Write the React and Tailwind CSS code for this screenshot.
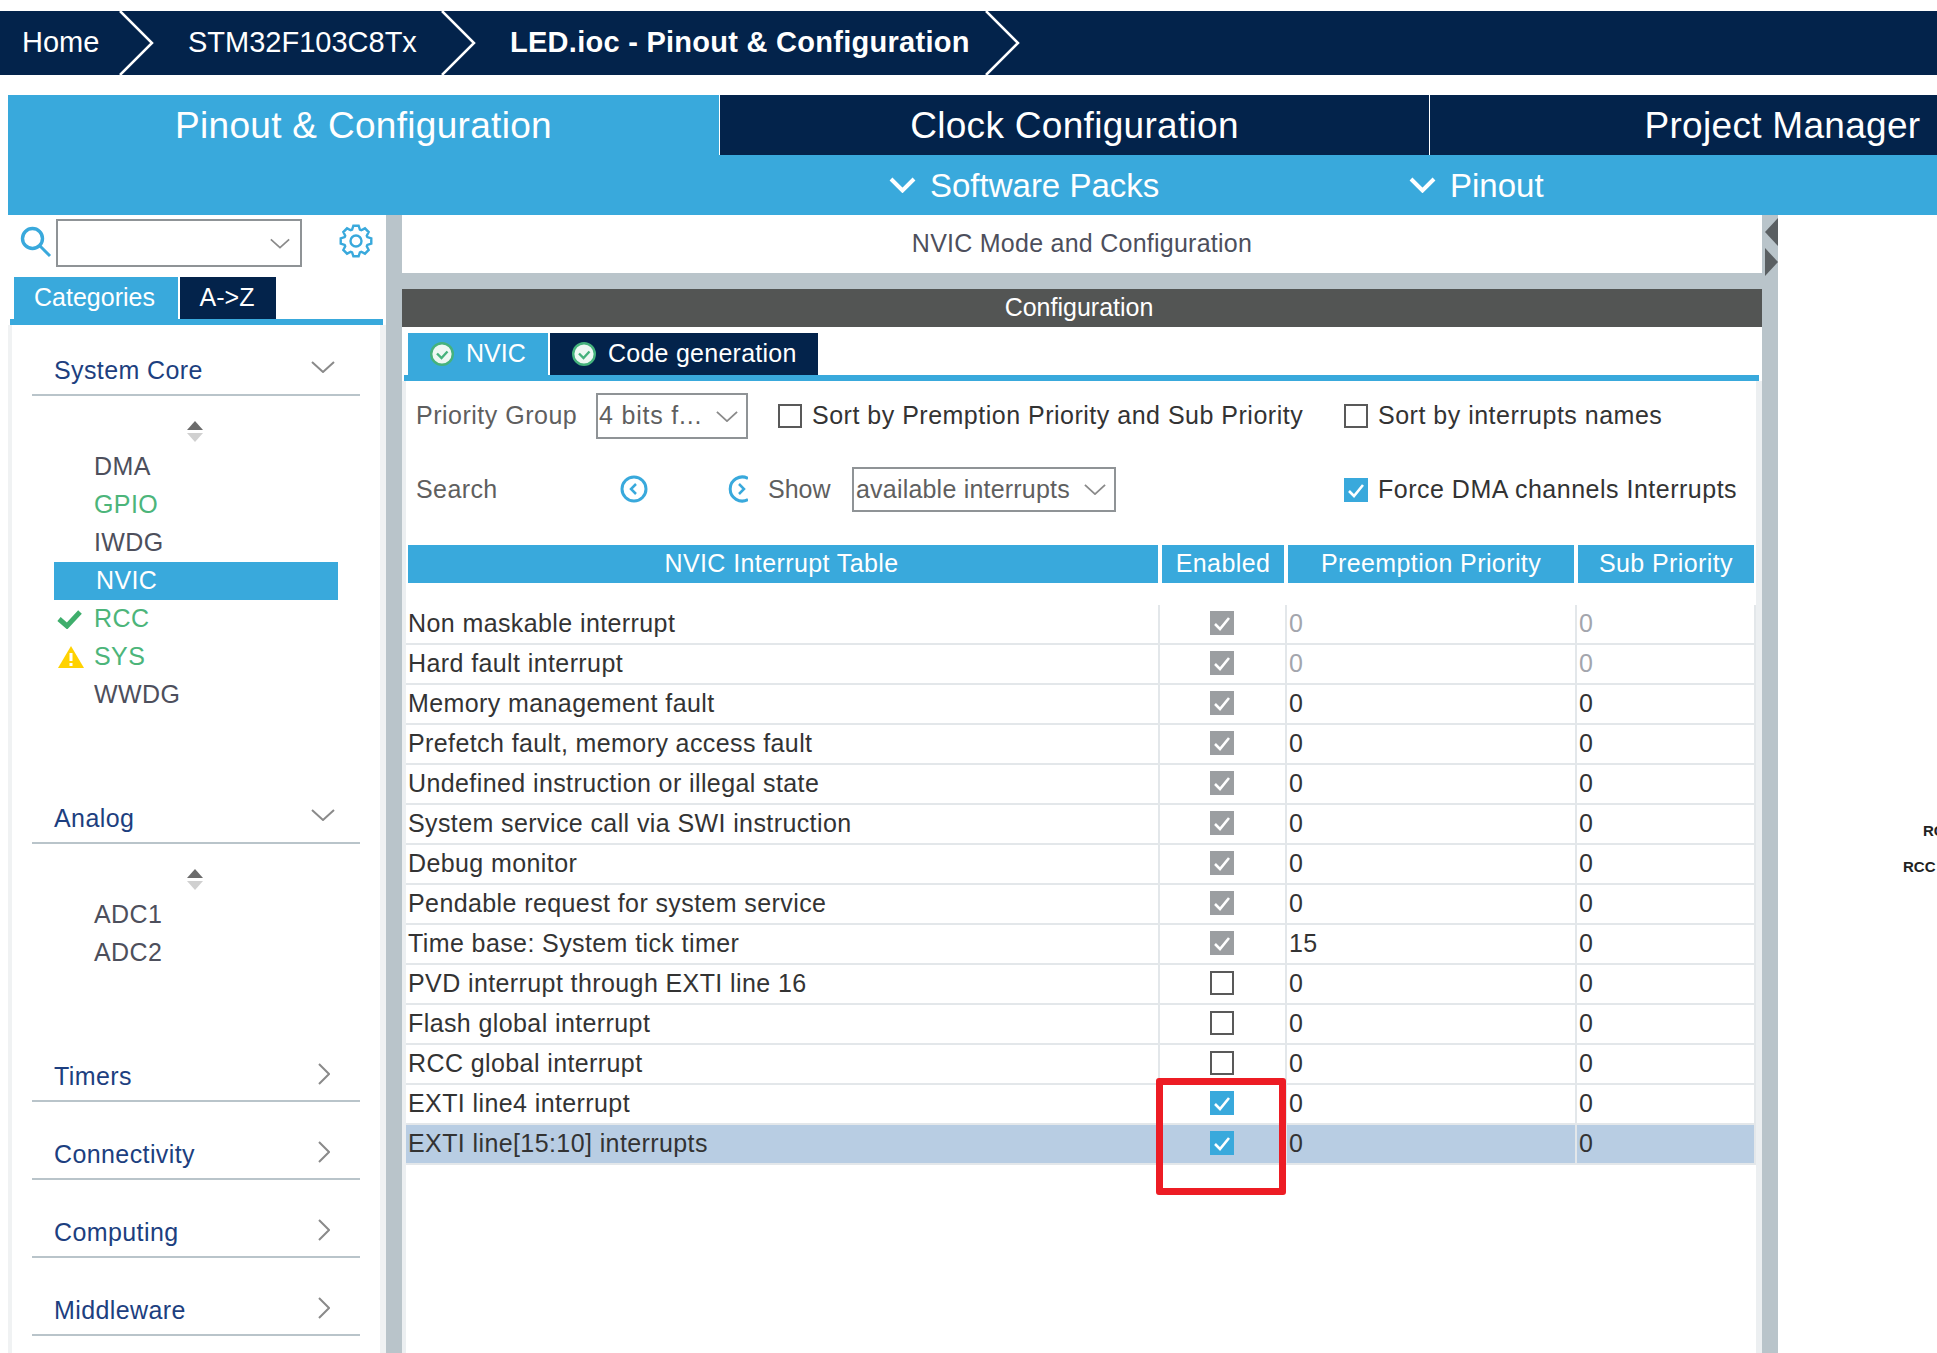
const rows = [
  ['Non maskable interrupt', 'locked', '0', '0', true],
  ['Hard fault interrupt', 'locked', '0', '0', true],
  ['Memory management fault', 'locked', '0', '0'],
  ['Prefetch fault, memory access fault', 'locked', '0', '0'],
  ['Undefined instruction or illegal state', 'locked', '0', '0'],
  ['System service call via SWI instruction', 'locked', '0', '0'],
  ['Debug monitor', 'locked', '0', '0'],
  ['Pendable request for system service', 'locked', '0', '0'],
  ['Time base: System tick timer', 'locked', '15', '0'],
  ['PVD interrupt through EXTI line 16', 'off', '0', '0'],
  ['Flash global interrupt', 'off', '0', '0'],
  ['RCC global interrupt', 'off', '0', '0'],
  ['EXTI line4 interrupt', 'on', '0', '0'],
  ['EXTI line[15:10] interrupts', 'on', '0', '0'],
];

// eight toothed gear outline, centred on 17,17
const gearPath = Array.from({ length: 8 }, (_, i) => {
  const a = (i * Math.PI) / 4 - Math.PI / 2;
  const pt = (r, d) => `${(17 + r * Math.cos(a + d)).toFixed(2)} ${(17 + r * Math.sin(a + d)).toFixed(2)}`;
  return `${i === 0 ? 'M' : 'L'}${pt(12, -0.39 + 0.06)}L${pt(15.5, -0.17)}L${pt(15.5, 0.17)}L${pt(12, 0.33)}`;
}).join('') + 'Z';

function ChevDown({ className }) {
  return (
    <svg viewBox="0 0 24 12" className={className}>
      <path d="M1 1l11 10L23 1" fill="none" stroke="#8a8a8a" strokeWidth="2" />
    </svg>
  );
}

function ChevRight() {
  return (
    <svg viewBox="0 0 12 22" className="w-[12px] h-[22px] mr-[30px] -mt-[4px]">
      <path d="M1 1l10 10L1 21" fill="none" stroke="#8a8a8a" strokeWidth="2" />
    </svg>
  );
}

function BigChev() {
  return (
    <svg viewBox="0 0 27 16" className="w-[27px] h-[16px] shrink-0">
      <path d="M2 2l11.5 11.5L25 2" fill="none" stroke="white" strokeWidth="4" />
    </svg>
  );
}

function Checkbox({ state }) {
  if (state === 'off') return <div className="w-[24px] h-[24px] border-2 border-[#595959] bg-white shrink-0" />;
  return (
    <div className={`w-[24px] h-[24px] shrink-0 ${state === 'on' ? 'bg-[#39a9dc]' : 'bg-[#9b9ea1]'}`}>
      <svg viewBox="0 0 24 24" className="w-[24px] h-[24px]">
        <path d="M5 13l5 5 9-11" fill="none" stroke="white" strokeWidth="2.6" />
      </svg>
    </div>
  );
}

function Crumb() {
  return (
    <svg viewBox="0 0 36 64" className="w-[36px] h-[64px] shrink-0">
      <path d="M1 0l32 32L1 64" fill="none" stroke="white" strokeWidth="2.5" />
    </svg>
  );
}

function OkDot() {
  return (
    <svg viewBox="0 0 24 24" className="w-[24px] h-[24px] shrink-0">
      <circle cx="12" cy="12" r="10.8" fill="#eef8f3" stroke="#45b27c" strokeWidth="2.4" />
      <path d="M7 11.5l4.5 4.5 6-6.5" fill="none" stroke="#45b27c" strokeWidth="2.4" />
    </svg>
  );
}

function SortArrows() {
  return (
    <svg viewBox="0 0 18 21" className="w-[18px] h-[21px] ml-[154px]">
      <path d="M9 0l8 9H1z" fill="#6b6b6b" />
      <path d="M9 21l8-9H1z" fill="#d0d0d0" />
    </svg>
  );
}

function Section({ title, open, children }) {
  return (
    <div>
      <div className="h-[50px] border-b-2 border-[#b9c4ca] flex items-center justify-between text-[#1d3f80] text-[25px] tracking-[0.4px] pl-[22px]">
        <span className="pt-[2px]">{title}</span>
        {open ? <ChevDown className="w-[24px] h-[12px] mr-[25px] -mt-[6px]" /> : <ChevRight />}
      </div>
      {children}
    </div>
  );
}

function Item({ label, color = 'text-[#4d4f5c]', icon, active }) {
  return (
    <div className={`h-[38px] w-[284px] ml-[22px] flex items-center text-[25px] tracking-[0.4px] ${active ? 'bg-[#39a9dc] text-white' : color}`}>
      <div className={`${active ? 'w-[42px]' : 'w-[40px]'} shrink-0 pl-[3px]`}>{icon}</div>
      {label}
    </div>
  );
}

export default function App() {
  return (
    <div className="relative w-[1937px] h-[1353px] overflow-hidden bg-white font-['Liberation_Sans',Arial,sans-serif]">
      {/* breadcrumb */}
      <div className="mt-[11px] h-[64px] bg-[#03234b] text-white flex items-center text-[29px]">
        <span className="pl-[22px] w-[119px]">Home</span>
        <Crumb />
        <span className="w-[286px] pl-[33px]">STM32F103C8Tx</span>
        <Crumb />
        <span className="w-[508px] pl-[33px] font-bold tracking-[0.27px] whitespace-nowrap">LED.ioc - Pinout &amp; Configuration</span>
        <Crumb />
      </div>

      {/* perspective tabs */}
      <div className="mt-[20px] ml-[8px] flex h-[60px] text-white text-[37px] tracking-[0.3px]">
        <div className="w-[711px] shrink-0 bg-[#39a9dc] flex items-center justify-center pt-[2px]">Pinout &amp; Configuration</div>
        <div className="w-[710px] shrink-0 bg-[#03234b] border-l border-white flex items-center justify-center pt-[2px]">Clock Configuration</div>
        <div className="w-[711px] shrink-0 bg-[#03234b] border-l border-white flex items-center justify-center pt-[2px] pr-[5px]">Project Manager</div>
      </div>
      <div className="ml-[8px] h-[60px] bg-[#39a9dc] text-white text-[33px] flex items-center pl-[881px]">
        <BigChev />
        <span className="ml-[14px] w-[479px] pt-[2px]">Software Packs</span>
        <BigChev />
        <span className="ml-[14px] pt-[2px]">Pinout</span>
      </div>

      <div className="flex h-[1138px]">
        {/* sidebar */}
        <div className="w-[386px] shrink-0 flex flex-col">
          <div className="mt-[4px] h-[48px] flex items-center pl-[20px]">
            <svg viewBox="0 0 32 34" className="w-[32px] h-[34px] shrink-0">
              <circle cx="12.5" cy="12.5" r="10" fill="none" stroke="#39a9dc" strokeWidth="3.4" />
              <path d="M20 20l10 10" stroke="#39a9dc" strokeWidth="3" />
            </svg>
            <div className="ml-[4px] w-[246px] h-[48px] border-2 border-[#8f9396] flex items-center justify-end pr-[10px]">
              <ChevDown className="w-[20px] h-[11px]" />
            </div>
            <svg viewBox="0 0 34 34" className="ml-[37px] w-[34px] h-[34px] shrink-0 -mt-[4px]">
              <path d={gearPath} fill="none" stroke="#39a9dc" strokeWidth="2.4" />
              <circle cx="17" cy="17" r="5.5" fill="none" stroke="#39a9dc" strokeWidth="2.4" />
            </svg>
          </div>
          <div className="mt-[10px] h-[42px] pl-[14px] flex text-white text-[25px]">
            <div className="w-[164px] bg-[#39a9dc] flex items-center justify-center pr-[3px]">Categories</div>
            <div className="ml-[2px] w-[96px] bg-[#03234b] flex items-center justify-center pr-[2px]">A-&gt;Z</div>
          </div>
          <div className="ml-[10px] w-[373px] h-[6px] bg-[#39a9dc] shrink-0" />
          <div className="ml-[8px] w-[378px] flex-1 border-l-[4px] border-r-[6px] border-[#f0f2f3] pl-[20px] pr-[20px] pt-[21px] min-h-0">
            <Section title="System Core" open>
              <div className="pt-[25px] pb-[80px]">
                <SortArrows />
                <div className="mt-[6px]">
                  <Item label="DMA" />
                  <Item label="GPIO" color="text-[#4cb57a]" />
                  <Item label="IWDG" />
                  <Item label="NVIC" active />
                  <Item
                    label="RCC"
                    color="text-[#4cb57a]"
                    icon={
                      <svg viewBox="0 0 25 20" className="w-[25px] h-[20px]">
                        <path d="M2 10l8 7L23 3" fill="none" stroke="#3fae6c" strokeWidth="5" />
                      </svg>
                    }
                  />
                  <Item
                    label="SYS"
                    color="text-[#4cb57a]"
                    icon={
                      <svg viewBox="0 0 26 22" className="w-[26px] h-[22px] ml-[1px]">
                        <path d="M13 0l13 22H0z" fill="#ffd200" />
                        <path d="M13 7v8M13 17v3" stroke="white" strokeWidth="3" />
                      </svg>
                    }
                  />
                  <Item label="WWDG" />
                </div>
              </div>
            </Section>
            <Section title="Analog" open>
              <div className="pt-[25px] pb-[80px]">
                <SortArrows />
                <div className="mt-[6px]">
                  <Item label="ADC1" />
                  <Item label="ADC2" />
                </div>
              </div>
            </Section>
            <div className="flex flex-col gap-[28px]">
              <Section title="Timers" />
              <Section title="Connectivity" />
              <Section title="Computing" />
              <Section title="Middleware" />
            </div>
          </div>
        </div>

        <div className="w-[16px] shrink-0 bg-[#b9c4ca]" />

        {/* centre panel */}
        <div className="w-[1360px] shrink-0 flex flex-col">
          <div className="h-[58px] flex items-center justify-center text-[25px] tracking-[0.25px] text-[#4d4f5c]">NVIC Mode and Configuration</div>
          <div className="h-[16px] bg-[#b9c4ca]" />
          <div className="h-[38px] bg-[#535554] text-white text-[25px] flex items-center justify-center pr-[6px]">Configuration</div>
          <div className="mt-[6px] h-[42px] pl-[6px] flex text-white text-[25px]">
            <div className="w-[140px] bg-[#39a9dc] flex items-center pl-[22px] gap-[12px]">
              <OkDot />
              NVIC
            </div>
            <div className="ml-[2px] w-[268px] bg-[#03234b] flex items-center pl-[22px] gap-[12px] tracking-[0.25px]">
              <OkDot />
              Code generation
            </div>
          </div>
          <div className="ml-[2px] w-[1355px] h-[6px] bg-[#39a9dc] shrink-0" />
          <div className="flex-1 min-h-0 border-l-[4px] border-r-[6px] border-[#eceff1]">
            <div className="mt-[12px] h-[46px] flex items-center text-[25px] tracking-[0.5px] text-[#333]">
              <span className="ml-[10px] w-[180px] text-[#5f5f5f]">Priority Group</span>
              <div className="w-[152px] h-[46px] border-2 border-[#8f9396] flex items-center justify-between pl-[1px] pr-[8px] text-[#5f5f5f] tracking-[0.8px]">
                4 bits f...
                <ChevDown className="w-[22px] h-[11px]" />
              </div>
              <div className="ml-[30px]"><Checkbox state="off" /></div>
              <span className="ml-[10px] w-[532px] whitespace-nowrap">Sort by Premption Priority and Sub Priority</span>
              <Checkbox state="off" />
              <span className="ml-[10px]">Sort by interrupts names</span>
            </div>
            <div className="mt-[28px] h-[45px] flex items-center text-[25px] text-[#333]">
              <span className="ml-[10px] w-[204px] text-[#5f5f5f] tracking-[0.4px]">Search</span>
              <svg viewBox="0 0 28 28" className="w-[28px] h-[28px] shrink-0 -mt-[2px]">
                <circle cx="14" cy="14" r="12" fill="none" stroke="#39a9dc" strokeWidth="3" />
                <path d="M16 9l-5 5 5 5" fill="none" stroke="#39a9dc" strokeWidth="2.5" />
              </svg>
              <svg viewBox="0 0 20 28" className="ml-[80px] w-[20px] h-[28px] shrink-0 -mt-[2px]">
                <path d="M20 3.5A12 12 0 1 0 20 24.5" fill="none" stroke="#39a9dc" strokeWidth="3" />
                <path d="M11 9l5 5-5 5" fill="none" stroke="#39a9dc" strokeWidth="2.5" />
              </svg>
              <span className="ml-[20px] w-[84px] text-[#5f5f5f]">Show</span>
              <div className="w-[264px] h-[45px] border-2 border-[#8f9396] flex items-center justify-between pl-[2px] pr-[8px] text-[#5f5f5f] tracking-[0.2px] whitespace-nowrap">
                available interrupts
                <ChevDown className="w-[22px] h-[11px]" />
              </div>
              <div className="ml-[228px]"><Checkbox state="on" /></div>
              <span className="ml-[10px] tracking-[0.5px] whitespace-nowrap">Force DMA channels Interrupts</span>
            </div>

            {/* interrupt table */}
            <div className="mt-[33px] h-[38px] flex gap-[4px] ml-[2px] text-white text-[25px] tracking-[0.4px]">
              <div className="w-[750px] bg-[#39a9dc] flex items-center justify-center pr-[3px]">NVIC Interrupt Table</div>
              <div className="w-[122px] bg-[#39a9dc] flex items-center justify-center">Enabled</div>
              <div className="w-[286px] bg-[#39a9dc] flex items-center justify-center">Preemption Priority</div>
              <div className="w-[176px] bg-[#39a9dc] flex items-center justify-center">Sub Priority</div>
            </div>
            <div className="mt-[22px] text-[25px] tracking-[0.4px] text-[#333] w-[1350px]">
              {rows.map(([name, state, pre, sub, dim], i) => (
                <div key={i} className={`h-[40px] flex border-b-2 border-[#e3e7ea] ${i === 13 ? 'bg-[#b8cde3]' : ''}`}>
                  <div className="w-[752px] pl-[2px] flex items-center whitespace-nowrap">{name}</div>
                  <div className="w-[127px] border-l-2 border-[#e3e7ea] flex justify-center pt-[6px] pr-[2px]"><Checkbox state={state} /></div>
                  <div className={`w-[290px] border-l-2 border-[#e3e7ea] pl-[2px] flex items-center ${dim ? 'text-[#a3a6ad]' : ''}`}>{pre}</div>
                  <div className={`w-[181px] border-x-2 border-[#e3e7ea] pl-[2px] flex items-center ${dim ? 'text-[#a3a6ad]' : ''}`}>{sub}</div>
                </div>
              ))}
            </div>
          </div>
        </div>

        <div className="relative w-[16px] shrink-0 bg-[#b9c4ca]">
          <svg viewBox="0 0 13 28" className="absolute left-[3px] top-[3px] w-[13px] h-[28px]"><path d="M13 0v28L0 14z" fill="#5a5f62" /></svg>
          <svg viewBox="0 0 13 28" className="absolute left-[3px] top-[33px] w-[13px] h-[28px]"><path d="M0 0v28l13-14z" fill="#5a5f62" /></svg>
        </div>
      </div>

      {/* pinout canvas labels, clipped by the page edge */}
      <span className="absolute left-[1923px] top-[823px] text-[15px] leading-[16px] font-bold text-[#222]">RC</span>
      <span className="absolute left-[1903px] top-[859px] text-[15px] leading-[16px] font-bold text-[#222] whitespace-nowrap">RCC</span>

      {/* red annotation */}
      <div className="absolute left-[1156px] top-[1078px] w-[130px] h-[117px] border-[7px] border-[#ed1c24] rounded-[3px]" />
    </div>
  );
}
